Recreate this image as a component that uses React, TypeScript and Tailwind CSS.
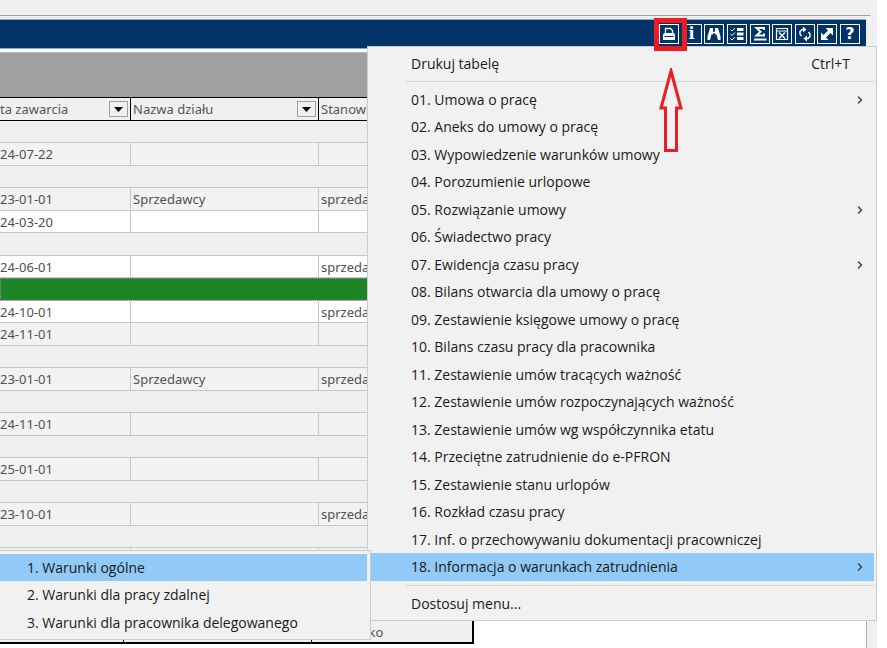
import type { ReactNode } from "react";
import { ChevronRight } from "lucide-react";

// ── Data ────────────────────────────────────────────────────────────────────
type Row = {
  kind: "group" | "gray" | "white" | "selected";
  date?: string;
  dept?: string;
  job?: string;
};

const rows: Row[] = [
  { kind: "group" },
  { kind: "gray", date: "24-07-22" },
  { kind: "group" },
  { kind: "gray", date: "23-01-01", dept: "Sprzedawcy", job: "sprzedawca" },
  { kind: "white", date: "24-03-20" },
  { kind: "group" },
  { kind: "white", date: "24-06-01", job: "sprzedawca" },
  { kind: "selected" },
  { kind: "white", date: "24-10-01", job: "sprzedawca" },
  { kind: "gray", date: "24-11-01" },
  { kind: "group" },
  { kind: "gray", date: "23-01-01", dept: "Sprzedawcy", job: "sprzedawca" },
  { kind: "group" },
  { kind: "gray", date: "24-11-01" },
  { kind: "group" },
  { kind: "gray", date: "25-01-01" },
  { kind: "group" },
  { kind: "gray", date: "23-10-01", job: "sprzedawca" },
  { kind: "group" },
  { kind: "gray" },
  { kind: "group" },
  { kind: "gray" },
];

const menuItems: { label: string; sub?: boolean; active?: boolean }[] = [
  { label: "01. Umowa o pracę", sub: true },
  { label: "02. Aneks do umowy o pracę" },
  { label: "03. Wypowiedzenie warunków umowy" },
  { label: "04. Porozumienie urlopowe" },
  { label: "05. Rozwiązanie umowy", sub: true },
  { label: "06. Świadectwo pracy" },
  { label: "07. Ewidencja czasu pracy", sub: true },
  { label: "08. Bilans otwarcia dla umowy o pracę" },
  { label: "09. Zestawienie księgowe umowy o pracę" },
  { label: "10. Bilans czasu pracy dla pracownika" },
  { label: "11. Zestawienie umów tracących ważność" },
  { label: "12. Zestawienie umów rozpoczynających ważność" },
  { label: "13. Zestawienie umów wg współczynnika etatu" },
  { label: "14. Przeciętne zatrudnienie do e-PFRON" },
  { label: "15. Zestawienie stanu urlopów" },
  { label: "16. Rozkład czasu pracy" },
  { label: "17. Inf. o przechowywaniu dokumentacji pracowniczej" },
  { label: "18. Informacja o warunkach zatrudnienia", sub: true, active: true },
];

const subItems = [
  "1. Warunki ogólne",
  "2. Warunki dla pracy zdalnej",
  "3. Warunki dla pracownika delegowanego",
];

// ── Toolbar ─────────────────────────────────────────────────────────────────
function ToolButton({ label, children }: { label: string; children: ReactNode }) {
  return (
    <button
      type="button"
      aria-label={label}
      className="flex h-5 w-5 items-center justify-center border border-white text-white"
    >
      {children}
    </button>
  );
}

function Glyph({ children }: { children: ReactNode }) {
  return (
    <svg viewBox="0 0 18 18" className="h-[18px] w-[18px] shrink-0" fill="none" stroke="currentColor">
      {children}
    </svg>
  );
}

function Toolbar() {
  return (
    <div className="flex w-[201px] justify-between">
      <ToolButton label="Drukuj">
        <Glyph>
          <path d="M5.5 8.500v-5h5l2 2v3" strokeWidth="1.300" />
          <path d="M4 8h10l1 2v5H3v-5z" fill="currentColor" stroke="none" />
          <path d="M4.500 11.500h9" stroke="#003366" />
        </Glyph>
      </ToolButton>
      <ToolButton label="Informacja">
        <span className="font-['DejaVu_Serif',serif] text-base leading-5 font-bold">i</span>
      </ToolButton>
      <ToolButton label="Szukaj">
        <Glyph>
          <path d="M5 3h3v6.500H6.500L5 15H2.500v-3.500z" fill="currentColor" stroke="none" />
          <path d="M13 3h-3v6.500h1.500L13 15h2.500v-3.500z" fill="currentColor" stroke="none" />
          <path d="M8 7.500h2" strokeWidth="1.500" />
        </Glyph>
      </ToolButton>
      <ToolButton label="Lista">
        <Glyph>
          <path d="M9 4.500h6.500M9 9h6.500M9 13.500h6.500" strokeWidth="3" />
          <path d="M2.500 4.500L4 6l3-3M2.500 9L4 10.500l3-3M2.500 13.500L4 15l3-3" />
        </Glyph>
      </ToolButton>
      <ToolButton label="Suma">
        <Glyph>
          <path d="M13 5V3H5.500L9.500 6.700 5.500 10.500H13v-2" strokeWidth="2" />
          <path d="M3 14.500h12.500" strokeWidth="2" />
        </Glyph>
      </ToolButton>
      <ToolButton label="Wyczyść filtr">
        <Glyph>
          <path d="M3.500 3.500h11v11h-11zM3.500 6h11" strokeWidth="1.200" />
          <path d="M6 7.500l6 6M12 7.500l-6 6" strokeWidth="1.400" />
        </Glyph>
      </ToolButton>
      <ToolButton label="Odśwież">
        <Glyph>
          <path d="M7.500 4.500H6L4 6.500V9l1.500 2M10.500 13.500H12l2-2V9l-1.500-2" strokeWidth="1.400" />
          <path d="M7 1.500v6L10.500 4.500zM11 10.500v6L7.500 13.500z" fill="currentColor" stroke="none" />
        </Glyph>
      </ToolButton>
      <ToolButton label="Powiększ">
        <Glyph>
          <path d="M7.500 3H15v7.500zM3 7.500V15h7.500z" fill="currentColor" stroke="none" />
          <path d="M5.500 12.500l7-7" strokeWidth="3.500" />
        </Glyph>
      </ToolButton>
      <ToolButton label="Pomoc">
        <span className="font-['DejaVu_Sans',sans-serif] text-base leading-4 font-bold">?</span>
      </ToolButton>
    </div>
  );
}

// ── Table ───────────────────────────────────────────────────────────────────
function HeaderCell({ label }: { label: string }) {
  return (
    <th className="h-6 border-y border-r border-black p-0 pl-[2px] font-normal text-[#555] first:pl-0">
      <div className="flex items-center justify-between pr-[2px]">
        <span className="whitespace-nowrap">{label}</span>
        <button
          type="button"
          aria-label={`Filtr: ${label}`}
          className="flex h-4 w-[19px] items-center justify-center border border-[#a0a0a0] bg-[#f0f0f0]"
        >
          <svg viewBox="0 0 9 5" className="h-[5px] w-[9px]">
            <path d="M0 0h9L4.500 5z" fill="#000" />
          </svg>
        </button>
      </div>
    </th>
  );
}

const cellBg = {
  group: "bg-[#efefef]",
  gray: "bg-[#f2f2f2]",
  white: "bg-white",
  selected: "bg-[#1e8526]",
};

function ContractsTable() {
  return (
    <table className="w-full table-fixed border-separate border-spacing-0 text-left text-[#505050]">
      <colgroup>
        <col className="w-[131px]" />
        <col className="w-[188px]" />
        <col />
      </colgroup>
      <thead className="bg-[#f0f0f0]">
        <tr>
          <HeaderCell label="ta zawarcia" />
          <HeaderCell label="Nazwa działu" />
          <HeaderCell label="Stanowisko" />
        </tr>
      </thead>
      <tbody>
        {rows.map((row, i) => (
          <tr key={i} className="odd:h-[22px] even:h-[23px]">
            {row.kind === "group" || row.kind === "selected" ? (
              <td
                colSpan={3}
                className={`border-b border-[#c6c6c6] p-0 ${cellBg[row.kind]} ${
                  row.kind === "selected" ? "outline-1 -outline-offset-1 outline-dotted outline-[#b080b0]" : ""
                }`}
              />
            ) : (
              [row.date, row.dept, row.job].map((text, c) => (
                <td
                  key={c}
                  className={`border-r border-b border-[#c6c6c6] py-0 pr-0 leading-5 ${
                    c === 0 ? "pl-0" : "pl-[2px]"
                  } ${cellBg[row.kind]}`}
                >
                  {text}
                </td>
              ))
            )}
          </tr>
        ))}
      </tbody>
    </table>
  );
}

// ── Menus ───────────────────────────────────────────────────────────────────
function MenuItem({ label, sub, active, hint }: { label: string; sub?: boolean; active?: boolean; hint?: string }) {
  return (
    <li className={`h-[27px] ${active ? "bg-[#91c9f7]" : ""}`}>
      <button type="button" role="menuitem" className="flex h-full w-full items-center pr-2 pl-10 text-left">
        <span className="flex-1 whitespace-nowrap">{label}</span>
        {hint && <span className="pr-4">{hint}</span>}
        {sub && <ChevronRight className="h-3 w-3 text-[#444]" strokeWidth={3} />}
      </button>
    </li>
  );
}

function Separator() {
  return (
    <li role="separator" className="flex h-[9px] items-center pl-[35px]">
      <span className="h-px w-full bg-[#d7d7d7]" />
    </li>
  );
}

function PrintMenu() {
  return (
    <ul
      role="menu"
      className="absolute top-[46px] right-0 w-[510px] border border-[#ccc] bg-[#f1f1f1] py-[3px] pr-[2px] pl-[3px] text-[#1a1a1a]"
    >
      <MenuItem label="Drukuj tabelę" hint="Ctrl+T" />
      <Separator />
      <li>
        <ul className="*:odd:h-[27px] *:even:h-7">
          {menuItems.map((item) => (
            <MenuItem key={item.label} {...item} />
          ))}
        </ul>
      </li>
      <Separator />
      <MenuItem label="Dostosuj menu..." />
    </ul>
  );
}

function SubMenu() {
  return (
    <ul
      role="menu"
      className="absolute top-[550px] left-0 w-[371px] border-y border-r border-[#ccc] bg-[#f1f1f1] py-[3px] pr-[3px] text-[#1a1a1a] *:even:h-7"
    >
      {subItems.map((label, i) => (
        <li key={label} className={`h-[27px] ${i === 0 ? "bg-[#91c9f7]" : ""}`}>
          <button type="button" role="menuitem" className="flex h-full w-full items-center pl-[27px] text-left">
            {label}
          </button>
        </li>
      ))}
    </ul>
  );
}

// ── Page ────────────────────────────────────────────────────────────────────
export default function App() {
  return (
    <div className="min-h-screen bg-white pr-[10px] font-['Open_Sans',sans-serif] text-sm">
      <div className="relative flex min-h-screen flex-col overflow-hidden bg-[#f0f0f0]">
        <div className="mr-[7px] h-4 border-b border-[#a0a0a0]" />
        <div className="mt-[3px] mr-[11px] border-y border-[#8fa6bd] bg-[#003366]">
          <div className="flex h-7 items-center justify-end pr-[6px]">
            <Toolbar />
          </div>
        </div>

        <main className="mr-[10px] flex-1 border-r border-[#b0b0b0] bg-white pt-[3px] font-['Noto_Sans',sans-serif] text-[13px]">
          <div className="h-[45px] border-t border-[#b8b8b8] bg-[#a0a0a0]" />
          <ContractsTable />
          <div className="flex h-7 w-[474px] border-r-2 border-b-2 border-black bg-[#f0f0f0] text-[#505050]">
            <span className="w-[124px] border-r border-black" />
            <span className="w-[188px] border-r border-black" />
            <span className="self-end pl-[2px]">Stanowisko</span>
          </div>
        </main>

        <PrintMenu />
        <SubMenu />

        {/* Red frame and arrow pointing at the print button */}
        <div className="absolute top-[18px] right-[190px] h-[33px] w-[33px] border-5 border-[#ed1c24]" />
        <svg
          viewBox="0 0 24 84"
          className="absolute top-[68px] right-[194px] h-[84px] w-6"
          fill="none"
          stroke="#ed1c24"
          strokeWidth="3"
        >
          <path d="M12 3L22 40H17.500V82.500H6.500V40H2z" />
        </svg>
      </div>
    </div>
  );
}
